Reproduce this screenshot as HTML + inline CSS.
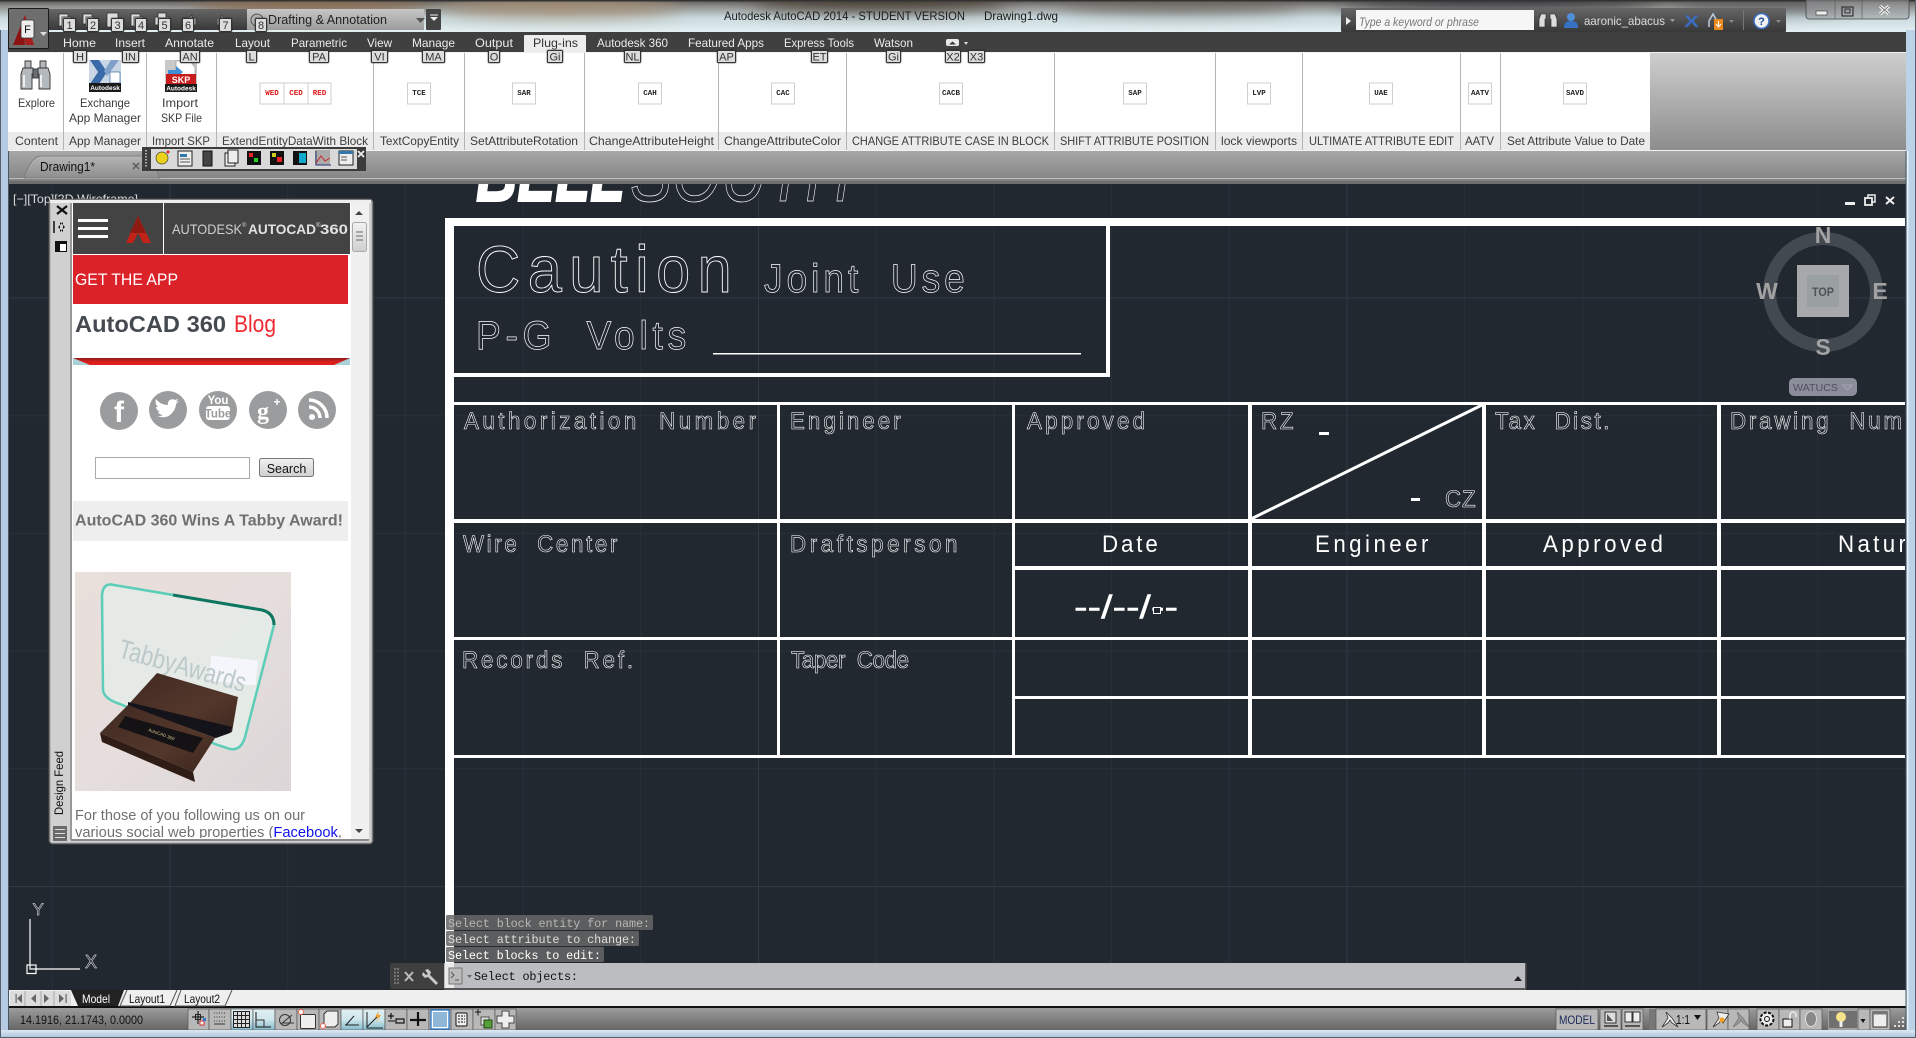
<!DOCTYPE html>
<html><head><meta charset="utf-8"><title>AutoCAD 2014</title>
<style>
html,body{margin:0;padding:0;background:#212830;width:1916px;height:1038px;overflow:hidden}
svg{display:block;position:absolute;left:0;top:0}
text{font-family:"Liberation Sans",sans-serif;white-space:pre}
.t{font-size:12px;fill:#ececec}
.p{font-size:12px;fill:#3c3c3c}
.b{font-size:12px;fill:#333}
.k{font-size:11px;fill:#333;text-anchor:middle}
.kr{fill:#dcdcdc;stroke:#333;stroke-width:1;filter:drop-shadow(.5px .5px .7px #222)}
.ib{fill:#fff;stroke:#cfcfcf;stroke-width:1}
.it{font-family:"Liberation Mono",monospace;font-weight:bold;font-size:7.5px;text-anchor:middle;fill:#222}
.ir{font-family:"Liberation Mono",monospace;font-weight:bold;font-size:7.5px;text-anchor:middle;fill:#e01818}
.d{fill:none;stroke:#fff;stroke-width:.6;font-size:24px}
.dd{fill:#fff;font-size:24px}
.m{font-family:"Liberation Mono",monospace;font-size:11.8px}
.sb{fill:#b8b8b8;stroke:#555;stroke-width:.7}
.sa{fill:url(#gBlue);stroke:#555;stroke-width:.7}
</style></head><body>
<svg width="1916" height="1038" viewBox="0 0 1916 1038" xmlns="http://www.w3.org/2000/svg">
<defs>
<linearGradient id="gAero" x1="0" y1="0" x2="0" y2="1"><stop offset="0" stop-color="#5b5855"/><stop offset=".2" stop-color="#8f8f8c"/><stop offset=".55" stop-color="#c9d9dd"/><stop offset="1" stop-color="#e4f0f3"/></linearGradient>
<linearGradient id="gDark" x1="0" y1="0" x2="0" y2="1"><stop offset="0" stop-color="#666"/><stop offset="1" stop-color="#383838"/></linearGradient>
<linearGradient id="gCombo" x1="0" y1="0" x2="0" y2="1"><stop offset="0" stop-color="#c6c6c6"/><stop offset="1" stop-color="#9c9c9c"/></linearGradient>
<linearGradient id="gRib" x1="0" y1="0" x2="0" y2="1"><stop offset="0" stop-color="#cfcfcf"/><stop offset="1" stop-color="#8d8d8d"/></linearGradient>
<linearGradient id="gDoc" x1="0" y1="0" x2="0" y2="1"><stop offset="0" stop-color="#a8a8a8"/><stop offset=".85" stop-color="#858585"/><stop offset="1" stop-color="#7a7a7a"/></linearGradient>
<linearGradient id="gTab" x1="0" y1="0" x2="0" y2="1"><stop offset="0" stop-color="#b5b5b5"/><stop offset="1" stop-color="#8e8e8e"/></linearGradient>
<linearGradient id="gStat" x1="0" y1="0" x2="0" y2="1"><stop offset="0" stop-color="#9c9c9c"/><stop offset="1" stop-color="#666"/></linearGradient>
<linearGradient id="gBlue" x1="0" y1="0" x2="0" y2="1"><stop offset="0" stop-color="#e0f0f4"/><stop offset=".5" stop-color="#cfe6ec"/><stop offset="1" stop-color="#83bccb"/></linearGradient>
<linearGradient id="gFrame" x1="0" y1="0" x2="0" y2="1"><stop offset="0" stop-color="#dce9f2"/><stop offset="1" stop-color="#a9c3dc"/></linearGradient>
<linearGradient id="gBtn" x1="0" y1="0" x2="0" y2="1"><stop offset="0" stop-color="#f2f2f2"/><stop offset="1" stop-color="#cfcfcf"/></linearGradient>
<linearGradient id="gPhoto" x1="0" y1="0" x2="1" y2="1"><stop offset="0" stop-color="#e9dfdb"/><stop offset=".5" stop-color="#e6dedd"/><stop offset="1" stop-color="#dcd6d8"/></linearGradient>
<linearGradient id="gWood" x1="0" y1="0" x2="1" y2="1"><stop offset="0" stop-color="#3f2a22"/><stop offset=".6" stop-color="#54372b"/><stop offset="1" stop-color="#3a261e"/></linearGradient>
<linearGradient id="gRed" x1="0" y1="0" x2="0" y2="1"><stop offset="0" stop-color="#8d1a1a"/><stop offset=".5" stop-color="#d61f1f"/><stop offset="1" stop-color="#e31f1f"/></linearGradient>
<filter id="bl" x="-30%" y="-100%" width="160%" height="300%"><feGaussianBlur stdDeviation="9"/></filter>
<clipPath id="cCanvas"><rect x="9" y="184" width="1896" height="806"/></clipPath>
<clipPath id="cFeed"><rect x="73" y="203" width="278" height="635"/></clipPath>
<clipPath id="cTitle"><rect x="0" y="0" width="1916" height="32"/></clipPath>
</defs>

<!-- base -->
<rect width="1916" height="1038" fill="#c3d6e8"/>

<!-- aero title -->
<rect x="0" y="0" width="1916" height="32" fill="url(#gAero)"/>
<g clip-path="url(#cTitle)" filter="url(#bl)">
<ellipse cx="310" cy="4" rx="120" ry="10" fill="#8a6a50"/>
<ellipse cx="560" cy="6" rx="120" ry="10" fill="#a58e74"/>
<ellipse cx="880" cy="2" rx="130" ry="8" fill="#3c3028"/>
<ellipse cx="1180" cy="3" rx="120" ry="8" fill="#6c655e"/>
<ellipse cx="1500" cy="2" rx="160" ry="7" fill="#2c2a30"/>
<ellipse cx="1760" cy="3" rx="90" ry="7" fill="#55565a"/>
</g>
<rect x="0" y="0" width="1916" height="1.5" fill="#333"/>
<text x="724" y="20" font-size="12" fill="#1c1c1c" textLength="241" lengthAdjust="spacingAndGlyphs">Autodesk AutoCAD 2014 - STUDENT VERSION</text>
<text x="984" y="20" font-size="12" fill="#1c1c1c" textLength="74" lengthAdjust="spacingAndGlyphs">Drawing1.dwg</text>

<!-- window buttons -->
<rect x="1806" y="-3" width="103" height="22" rx="3" fill="#9a9d9f" fill-opacity=".55" stroke="#444" stroke-width=".8"/>
<line x1="1835" y1="0" x2="1835" y2="19" stroke="#555" stroke-width=".6"/><line x1="1862" y1="0" x2="1862" y2="19" stroke="#555" stroke-width=".6"/>
<rect x="1816" y="11" width="11" height="4" fill="#eee" stroke="#444" stroke-width=".7"/>
<rect x="1842" y="7" width="11" height="9" fill="none" stroke="#333" stroke-width="1.2"/><rect x="1845" y="9" width="5" height="4" fill="none" stroke="#333"/>
<path d="M1880 6 L1889 14 M1889 6 L1880 14" stroke="#eee" stroke-width="3.4"/><path d="M1880 6 L1889 14 M1889 6 L1880 14" stroke="#444" stroke-width=".6"/>

<!-- tab bar -->
<rect x="8" y="32" width="1898" height="20" fill="#404040"/>
<path d="M524 52 V36 q0 -1 1 -1 H585 q1 0 1 1 V52z" fill="#ededed"/>
<text class="t" x="63" y="47" textLength="33" lengthAdjust="spacingAndGlyphs">Home</text>
<text class="t" x="115" y="47" textLength="30" lengthAdjust="spacingAndGlyphs">Insert</text>
<text class="t" x="165" y="47" textLength="49" lengthAdjust="spacingAndGlyphs">Annotate</text>
<text class="t" x="235" y="47" textLength="35" lengthAdjust="spacingAndGlyphs">Layout</text>
<text class="t" x="291" y="47" textLength="56" lengthAdjust="spacingAndGlyphs">Parametric</text>
<text class="t" x="367" y="47" textLength="25" lengthAdjust="spacingAndGlyphs">View</text>
<text class="t" x="412" y="47" textLength="43" lengthAdjust="spacingAndGlyphs">Manage</text>
<text class="t" x="475" y="47" textLength="38" lengthAdjust="spacingAndGlyphs">Output</text>
<text class="b" x="533" y="47" textLength="45" lengthAdjust="spacingAndGlyphs">Plug-ins</text>
<text class="t" x="597" y="47" textLength="71" lengthAdjust="spacingAndGlyphs">Autodesk 360</text>
<text class="t" x="688" y="47" textLength="76" lengthAdjust="spacingAndGlyphs">Featured Apps</text>
<text class="t" x="784" y="47" textLength="70" lengthAdjust="spacingAndGlyphs">Express Tools</text>
<text class="t" x="874" y="47" textLength="39" lengthAdjust="spacingAndGlyphs">Watson</text>
<rect x="946" y="39" width="13" height="7" rx="2" fill="#e8e8e8"/><path d="M949 44.500l3.500 -3 3.500 3z" fill="#333"/><path d="M964 42h4l-2 3z" fill="#ddd"/>

<!-- QAT -->
<rect x="49" y="9" width="198" height="21" fill="url(#gDark)"/>
<rect x="247" y="9" width="177" height="21" fill="url(#gCombo)"/>
<rect x="426" y="9" width="15" height="21" rx="1" fill="#444"/>
<path d="M430 17h8l-4 4z M430 14.500h8v1h-8z" fill="#eee"/>
<path d="M416 18h9l-4.500 5z" fill="#555"/>
<text x="268" y="24" font-size="12.500" fill="#222" textLength="119" lengthAdjust="spacingAndGlyphs">Drafting &amp; Annotation</text>
<circle cx="257" cy="20" r="6" fill="#b0b0b0" stroke="#555"/>
<g fill="#ddd" stroke="#333" stroke-width=".8">
<rect x="59" y="14" width="9" height="12"/><rect x="62" y="17" width="9" height="12"/>
<rect x="83" y="14" width="9" height="10"/><rect x="86" y="17" width="8" height="10"/>
<rect x="107" y="13" width="11" height="14"/>
<rect x="131" y="14" width="9" height="12"/><rect x="134" y="17" width="9" height="10"/>
<rect x="155" y="17" width="14" height="8"/><rect x="158" y="13" width="8" height="5"/>
</g>
<path d="M185 21 l7 -6 v3 h4 v7 h-4 v-1z" fill="#aaa" stroke="#333" stroke-width=".8"/>
<path d="M228 21 l-7 -6 v3 h-4 v7 h4 v-1z" fill="#888" stroke="#444" stroke-width=".8"/>
<!-- app button -->
<rect x="8.500" y="8.500" width="40" height="40" rx="1" fill="#6e6e6e" stroke="#1c1c1c"/>
<path d="M13 45 L25 15 L31 36 L24 36 L25 45 Z" fill="#8e1414"/>
<path d="M25 15 L34 45 L26 45 L22 30 Z" fill="#a81e1e"/>
<rect x="21" y="20" width="13" height="18" rx="2" fill="#ededed" stroke="#333" stroke-width=".8"/>
<text x="27.500" y="33" font-size="11" fill="#111" text-anchor="middle">F</text>
<path d="M40 32h7l-3.500 4z" fill="#ddd"/>

<!-- ribbon -->
<rect x="8" y="52" width="1642" height="98" fill="#fff"/>
<rect x="1650" y="52" width="256" height="98" fill="url(#gRib)"/>
<rect x="8" y="52" width="1898" height="1" fill="#f0f0f0"/>
<rect x="8" y="132" width="1642" height="18" fill="#ebebeb"/>
<rect x="8" y="150" width="1898" height="1.500" fill="#f2f2f2"/>
<g stroke="#b4b4b4" stroke-width="1">
<line x1="63.500" y1="53" x2="63.500" y2="150"/><line x1="146.500" y1="53" x2="146.500" y2="150"/><line x1="216.500" y1="53" x2="216.500" y2="150"/><line x1="373.500" y1="53" x2="373.500" y2="150"/><line x1="464.500" y1="53" x2="464.500" y2="150"/><line x1="584.500" y1="53" x2="584.500" y2="150"/><line x1="718.500" y1="53" x2="718.500" y2="150"/><line x1="846.500" y1="53" x2="846.500" y2="150"/><line x1="1054.500" y1="53" x2="1054.500" y2="150"/><line x1="1215.500" y1="53" x2="1215.500" y2="150"/><line x1="1302.500" y1="53" x2="1302.500" y2="150"/><line x1="1460.500" y1="53" x2="1460.500" y2="150"/><line x1="1500.500" y1="53" x2="1500.500" y2="150"/>
</g>
<!-- ribbon panel labels -->
<text class="p" x="15" y="145" textLength="43" lengthAdjust="spacingAndGlyphs">Content</text>
<text class="p" x="69" y="145" textLength="72" lengthAdjust="spacingAndGlyphs">App Manager</text>
<text class="p" x="152" y="145" textLength="58" lengthAdjust="spacingAndGlyphs">Import SKP</text>
<text class="p" x="222" y="145" textLength="146" lengthAdjust="spacingAndGlyphs">ExtendEntityDataWith Block</text>
<text class="p" x="380" y="145" textLength="79" lengthAdjust="spacingAndGlyphs">TextCopyEntity</text>
<text class="p" x="470" y="145" textLength="108" lengthAdjust="spacingAndGlyphs">SetAttributeRotation</text>
<text class="p" x="589" y="145" textLength="125" lengthAdjust="spacingAndGlyphs">ChangeAttributeHeight</text>
<text class="p" x="724" y="145" textLength="117" lengthAdjust="spacingAndGlyphs">ChangeAttributeColor</text>
<text class="p" x="852" y="145" textLength="197" lengthAdjust="spacingAndGlyphs">CHANGE ATTRIBUTE CASE IN BLOCK</text>
<text class="p" x="1060" y="145" textLength="149" lengthAdjust="spacingAndGlyphs">SHIFT ATTRIBUTE POSITION</text>
<text class="p" x="1221" y="145" textLength="76" lengthAdjust="spacingAndGlyphs">lock viewports</text>
<text class="p" x="1309" y="145" textLength="145" lengthAdjust="spacingAndGlyphs">ULTIMATE ATTRIBUTE EDIT</text>
<text class="p" x="1465" y="145" textLength="29" lengthAdjust="spacingAndGlyphs">AATV</text>
<text class="p" x="1507" y="145" textLength="138" lengthAdjust="spacingAndGlyphs">Set Attribute Value to Date</text>
<!-- big buttons -->
<text class="p" x="18" y="107" textLength="37" lengthAdjust="spacingAndGlyphs">Explore</text>
<text class="p" x="80" y="107" textLength="50" lengthAdjust="spacingAndGlyphs">Exchange</text>
<text class="p" x="69" y="122" textLength="72" lengthAdjust="spacingAndGlyphs">App Manager</text>
<text class="p" x="162" y="107" textLength="36" lengthAdjust="spacingAndGlyphs">Import</text>
<text class="p" x="161" y="122" textLength="41" lengthAdjust="spacingAndGlyphs">SKP File</text>
<!-- binoculars -->
<g fill="#b4b9bd" stroke="#333" stroke-width=".9">
<path d="M25 61h6v7h-6z M40 61h6v7h-6z"/>
<path d="M23 68h10v6h-1v15h-11v-15z"/><path d="M38 68h10l2 6v15h-11v-15h-1z"/>
<rect x="33" y="69" width="5" height="9" fill="#6a6f74"/>
</g>
<path d="M24 75v12M41 75v12" stroke="#eee" stroke-width="2"/>
<!-- exchange -->
<rect x="89" y="60" width="32" height="32" fill="#c9d6e6"/>
<path d="M90 60h9l8 12 -8 12h-9l8 -12z" fill="#3a6aa8"/>
<path d="M111 60h8l-12 16 -3 -5z" fill="#7fa0c8"/>
<rect x="110" y="72" width="10" height="11" fill="#fff" stroke="#3a6aa8" stroke-width=".7"/>
<rect x="89" y="83" width="32" height="9" fill="#1a1a1a"/>
<text x="105" y="90" font-size="6.500" font-weight="bold" fill="#fff" text-anchor="middle">Autodesk</text>
<!-- SKP -->
<rect x="165" y="60" width="32" height="32" fill="#c8c8c8"/>
<path d="M176 61h14l5 6v11h-19z" fill="#fff" stroke="#888" stroke-width=".6"/>
<path d="M168 70h8v-4l7 6 -7 6v-4h-8z" fill="#3f8fd8"/>
<rect x="166" y="74" width="30" height="10" fill="#c91c1c"/>
<text x="181" y="83" font-size="9" font-weight="bold" fill="#fff" text-anchor="middle">SKP</text>
<rect x="165" y="84" width="32" height="8" fill="#1a1a1a"/>
<text x="181" y="90.500" font-size="6.500" font-weight="bold" fill="#fff" text-anchor="middle">Autodesk</text>
<!-- small buttons -->
<rect class="ib" x="260" y="83" width="24" height="21"/><rect class="ib" x="284" y="83" width="24" height="21"/><rect class="ib" x="308" y="83" width="23" height="21"/>
<text class="ir" x="272" y="95">WED</text><text class="ir" x="296" y="95">CED</text><text class="ir" x="319.500" y="95">RED</text>
<rect class="ib" x="407.500" y="83" width="23" height="21"/><text class="it" x="419" y="95">TCE</text>
<rect class="ib" x="512.500" y="83" width="23" height="21"/><text class="it" x="524" y="95">SAR</text>
<rect class="ib" x="638.500" y="83" width="23" height="21"/><text class="it" x="650" y="95">CAH</text>
<rect class="ib" x="771.500" y="83" width="23" height="21"/><text class="it" x="783" y="95">CAC</text>
<rect class="ib" x="939.500" y="83" width="23" height="21"/><text class="it" x="951" y="95">CACB</text>
<rect class="ib" x="1123.500" y="83" width="23" height="21"/><text class="it" x="1135" y="95">SAP</text>
<rect class="ib" x="1247.500" y="83" width="23" height="21"/><text class="it" x="1259" y="95">LVP</text>
<rect class="ib" x="1369.500" y="83" width="23" height="21"/><text class="it" x="1381" y="95">UAE</text>
<rect class="ib" x="1468.500" y="83" width="23" height="21"/><text class="it" x="1480" y="95">AATV</text>
<rect class="ib" x="1563.500" y="83" width="23" height="21"/><text class="it" x="1575" y="95">SAVD</text>

<!-- doc tab bar -->
<rect x="8" y="151" width="1898" height="33" fill="url(#gDoc)"/>
<rect x="8" y="178" width="1898" height="1" fill="#bdbdbd"/>
<rect x="8" y="181" width="1898" height="3" fill="#6e6e6e"/>
<path d="M24 178 Q30 158 40 156 H150 L160 178Z" fill="url(#gTab)" stroke="#777" stroke-width=".7"/>
<text x="40" y="171" font-size="12.500" fill="#111" textLength="55" lengthAdjust="spacingAndGlyphs">Drawing1*</text>
<path d="M133 163l6 6m0 -6l-6 6" stroke="#666" stroke-width="1.800"/>

<!-- canvas -->
<rect x="9" y="184" width="1897" height="806" fill="#212830"/>
<g clip-path="url(#cCanvas)">
<path d="M52.300 184V990M287.700 184V990M405.400 184V990M523.100 184V990M640.800 184V990M876.200 184V990M993.900 184V990M1111.600 184V990M1229.300 184V990M1464.700 184V990M1582.400 184V990M1700.100 184V990M1817.800 184V990M9 533.400H1906M9 651.100H1906M9 768.800H1906M9 415.700H1906" stroke="#2a313a" stroke-width="1" fill="none"/>
<path d="M170 184V990M758.500 184V990M1347 184V990M9 298H1906M9 886.500H1906" stroke="#323942" stroke-width="1" fill="none"/>

<!-- BELLSOUTH -->
<text x="476" y="201" font-size="82" font-weight="bold" font-style="italic" fill="#fff" stroke="#fff" stroke-width="2" textLength="149" lengthAdjust="spacingAndGlyphs">BELL</text>
<text x="630" y="201" font-size="82" font-style="italic" fill="none" stroke="#fff" stroke-width=".7" textLength="221" lengthAdjust="spacingAndGlyphs">SOUTH</text>

<!-- linework -->
<g fill="#fff">
<rect x="445" y="218" width="1461" height="8"/>
<rect x="445" y="218" width="9" height="772"/>
<rect x="1106" y="226" width="4" height="151"/>
<rect x="454" y="373" width="656" height="4"/>
<rect x="454" y="402" width="1452" height="3"/>
<rect x="454" y="519" width="1452" height="4"/>
<rect x="454" y="637" width="1452" height="3"/>
<rect x="454" y="755" width="1452" height="3"/>
<rect x="1012" y="566" width="894" height="4"/>
<rect x="1015" y="696" width="891" height="3"/>
<rect x="777" y="405" width="3" height="350"/>
<rect x="1012" y="405" width="3" height="350"/>
<rect x="1248" y="405" width="4" height="350"/>
<rect x="1482" y="405" width="4" height="350"/>
<rect x="1717" y="405" width="4" height="350"/>
<rect x="713" y="353" width="368" height="1.500"/>
<rect x="1319" y="432" width="10" height="3"/>
<rect x="1411" y="498" width="9" height="3"/>
</g>
<line x1="1251" y1="519" x2="1482" y2="405" stroke="#fff" stroke-width="3"/>

<text class="d" style="font-size:66px;stroke-width:.9" transform="translate(476 292) scale(.93 1)" textLength="275" lengthAdjust="spacing">Caution</text>
<text class="d" style="font-size:40px;stroke-width:.7" transform="translate(764 292) scale(.93 1)" textLength="216" lengthAdjust="spacing">Joint  Use</text>
<text class="d" style="font-size:40px;stroke-width:.7" transform="translate(476 349) scale(.93 1)" textLength="226" lengthAdjust="spacing">P-G  Volts</text>
<text class="d" transform="translate(464 429) scale(.93 1)" textLength="314" lengthAdjust="spacing">Authorization  Number</text>
<text class="d" transform="translate(790 429) scale(.93 1)" textLength="119" lengthAdjust="spacing">Engineer</text>
<text class="d" transform="translate(1027 429) scale(.93 1)" textLength="127" lengthAdjust="spacing">Approved</text>
<text class="d" transform="translate(1261 429) scale(.93 1)" textLength="35" lengthAdjust="spacing">RZ</text>
<text class="d" transform="translate(1445 507) scale(.93 1)" textLength="33" lengthAdjust="spacing">CZ</text>
<text class="d" transform="translate(1495 429) scale(.93 1)" textLength="123" lengthAdjust="spacing">Tax  Dist.</text>
<text class="d" transform="translate(1730 429) scale(.93 1)" textLength="185" lengthAdjust="spacing">Drawing  Num</text>
<text class="d" transform="translate(463 552) scale(.93 1)" textLength="166" lengthAdjust="spacing">Wire  Center</text>
<text class="d" transform="translate(790 552) scale(.93 1)" textLength="180" lengthAdjust="spacing">Draftsperson</text>
<text class="d" transform="translate(462 668) scale(.93 1)" textLength="184" lengthAdjust="spacing">Records  Ref.</text>
<text class="d" transform="translate(791 668) scale(.93 1)" textLength="127" lengthAdjust="spacing">Taper  Code</text>
<text class="dd" transform="translate(1102 552) scale(.93 1)" textLength="60" lengthAdjust="spacing">Date</text>
<text class="dd" transform="translate(1315 552) scale(.93 1)" textLength="122" lengthAdjust="spacing">Engineer</text>
<text class="dd" transform="translate(1543 552) scale(.93 1)" textLength="129" lengthAdjust="spacing">Approved</text>
<text class="dd" transform="translate(1838 552) scale(.93 1)" textLength="73" lengthAdjust="spacing">Natur</text>
<text class="dd" style="font-size:32px;stroke:#fff;stroke-width:.5" x="1074" y="618" textLength="104" lengthAdjust="spacingAndGlyphs">--/--/--</text>
<rect x="1153.500" y="607.500" width="7" height="6" fill="#212830" stroke="#fff"/>
</g>

<!-- viewport controls label -->
<text x="13" y="203" font-size="12" fill="#dcdcdc" textLength="125" lengthAdjust="spacingAndGlyphs">[−][Top][2D Wireframe]</text>
<rect x="1845" y="202" width="10" height="3" fill="#eee"/>
<rect x="1868" y="195" width="7" height="7" fill="none" stroke="#eee" stroke-width="1.500"/>
<rect x="1865" y="198" width="7" height="7" fill="#212830" stroke="#eee" stroke-width="1.800"/>
<path d="M1886 197l8 7m0 -7l-8 7" stroke="#eee" stroke-width="2"/>

<!-- ViewCube -->
<circle cx="1823" cy="292" r="53.500" fill="none" stroke="#434950" stroke-width="13"/>
<rect x="1797" y="265" width="52" height="52" fill="#a7a8a9"/>
<rect x="1807" y="275" width="32" height="32" fill="#9a9fa0"/>
<text x="1823" y="296" font-size="12" font-weight="bold" fill="#4e5358" text-anchor="middle" textLength="22" lengthAdjust="spacingAndGlyphs">TOP</text>
<text x="1823" y="243" font-size="23" font-weight="bold" fill="#a2a2a2" text-anchor="middle">N</text>
<text x="1823" y="355" font-size="23" font-weight="bold" fill="#a2a2a2" text-anchor="middle">S</text>
<text x="1767" y="299" font-size="23" font-weight="bold" fill="#a2a2a2" text-anchor="middle">W</text>
<text x="1880" y="299" font-size="23" font-weight="bold" fill="#a2a2a2" text-anchor="middle">E</text>
<rect x="1789" y="378" width="68" height="18" rx="5" fill="#8b8d9b"/>
<text x="1793" y="391" font-size="10.500" fill="#4d4f5c" textLength="45" lengthAdjust="spacingAndGlyphs">WATUCS</text>
<path d="M1843 385h9l-4.500 5z" fill="none" stroke="#a2a4b0"/>

<!-- UCS -->
<g stroke="#fff" fill="none" stroke-width="1.200">
<path d="M30 919V969H80"/><rect x="27" y="965" width="9" height="8.500"/>
</g>
<text x="32.500" y="915" font-size="17" fill="none" stroke="#fff" stroke-width=".45">Y</text>
<text x="85" y="968" font-size="18" fill="none" stroke="#fff" stroke-width=".45">X</text>

<!-- Command history -->
<rect x="446" y="915" width="207" height="15" rx="1.500" fill="#666" fill-opacity=".85"/>
<rect x="446" y="931" width="193" height="15" rx="1.500" fill="#666" fill-opacity=".85"/>
<rect x="446" y="947" width="158" height="15" rx="1.500" fill="#666" fill-opacity=".85"/>
<text class="m" x="448" y="927" fill="#b6b6b6" textLength="202">Select block entity for name:</text>
<text class="m" x="448" y="943" fill="#dedede" textLength="188">Select attribute to change:</text>
<text class="m" x="448" y="959" fill="#fff" textLength="153">Select blocks to edit:</text>
<!-- Command bar -->
<rect x="390" y="963" width="54" height="26" rx="2" fill="#3f3f3f"/>
<path d="M395 968v17M398 968v17" stroke="#888" stroke-width="1.500" stroke-dasharray="2 1.500"/>
<path d="M405 972l8 9m0 -9l-8 9" stroke="#bbb" stroke-width="2"/>
<path d="M425 970l3 -1 3 3 -1 3 8 8 -2 2 -8 -8 -3 1 -3 -3 1 -3 3 3 2 -1 -3 -4z" fill="#c9c9c9"/>
<rect x="444" y="963" width="1082" height="26" fill="#bcbdc0"/>
<rect x="445" y="963" width="9" height="27" fill="#fff" fill-opacity=".7"/>
<rect x="444" y="988" width="1082" height="2" fill="#555"/>
<rect x="1525" y="963" width="1.500" height="26" fill="#555"/>
<rect x="449" y="968" width="13" height="16" fill="#bbb" stroke="#777"/>
<path d="M451 972l3 3 -3 3M455 980h4" stroke="#555" fill="none"/>
<path d="M467 975h5l-2.500 3z" fill="#666"/>
<text class="m" x="474" y="980" fill="#111" textLength="104">Select objects:</text>
<path d="M1514 981h8l-4 -5z" fill="#222"/>

<!-- Design Feed palette -->
<rect x="49.500" y="199.500" width="323" height="644" rx="3" fill="#d0d0d0" stroke="#777" stroke-width="1.500"/>
<rect x="50" y="200" width="321" height="3" fill="#eee"/>
<rect x="70" y="203" width="2" height="637" fill="#999"/>
<rect x="72" y="203" width="279" height="636" fill="#fff"/>
<rect x="351" y="203" width="18" height="636" fill="#f0f0f0"/>
<rect x="71" y="839" width="298" height="2" fill="#8a8a8a"/>
<path d="M57 206l10 8m0 -8l-10 8" stroke="#111" stroke-width="2.200"/>
<path d="M54 221v12" stroke="#111" stroke-width="1.500"/><path d="M63 222l-5 5 5 5zM60 222l5 5 -5 5z" fill="#111"/>
<rect x="55.500" y="241.500" width="11" height="10" fill="#fff" stroke="#111"/><rect x="55" y="241" width="12" height="3" fill="#111"/><rect x="55" y="244" width="5" height="8" fill="#111"/>
<text transform="translate(63,815) rotate(-90)" font-size="12" fill="#111" textLength="64" lengthAdjust="spacingAndGlyphs">Design Feed</text>
<rect x="53" y="826" width="14" height="15" fill="#6a6a6a"/>
<path d="M55 829.500h10M55 833.500h10M55 837.500h10" stroke="#ddd"/>
<path d="M355 215h8l-4 -4z M355 829h8l-4 4z" fill="#444"/>
<rect x="352.500" y="222.500" width="14" height="29" rx="2" fill="url(#gBtn)" stroke="#aaa"/>
<path d="M356 232h7M356 236h7M356 240h7" stroke="#666"/>

<g clip-path="url(#cFeed)">
<rect x="73" y="203" width="277" height="51" fill="#434343"/>
<rect x="73" y="254" width="277" height="1" fill="#fff"/>
<rect x="163" y="203" width="1" height="51" fill="#fff"/>
<rect x="78" y="219" width="30" height="3" fill="#fff"/><rect x="78" y="227" width="30" height="3" fill="#fff"/><rect x="78" y="235" width="30" height="3" fill="#fff"/>
<path d="M138 216L151 243H143L138 233L133 243H126Z" fill="#c22318"/><path d="M138 216L130 233H146Z" fill="#8f1a12"/>
<text x="172" y="234" font-size="14" fill="#cfcfcf" textLength="70" lengthAdjust="spacingAndGlyphs">AUTODESK</text>
<text x="242" y="227" font-size="6" fill="#cfcfcf">®</text>
<text x="248" y="234" font-size="14" font-weight="bold" fill="#e2e2e2" textLength="68" lengthAdjust="spacingAndGlyphs">AUTOCAD</text>
<text x="316" y="227" font-size="6" fill="#e2e2e2">®</text>
<text x="320" y="234" font-size="14" font-weight="bold" fill="#e2e2e2" textLength="28" lengthAdjust="spacingAndGlyphs">360</text>
<rect x="73" y="255" width="275" height="49" fill="#dc2229"/>
<text x="75" y="285" font-size="16.500" fill="#fff" textLength="103" lengthAdjust="spacingAndGlyphs">GET THE APP</text>
<text x="75" y="332" font-size="23" font-weight="bold" fill="#454a50" textLength="151" lengthAdjust="spacingAndGlyphs">AutoCAD 360</text>
<text x="234" y="332" font-size="24" fill="#ee2a30" textLength="42" lengthAdjust="spacingAndGlyphs">Blog</text>
<rect x="73" y="358" width="277" height="7" fill="url(#gRed)"/>
<path d="M73 358L90 365H73Z M350 358L334 365H350Z" fill="#a8d2d8"/>
<!-- social -->
<g fill="#9a9c9e">
<circle cx="119" cy="411" r="19"/><circle cx="168" cy="410" r="19"/><circle cx="218" cy="410" r="19"/><circle cx="268" cy="410" r="19"/><circle cx="317" cy="410" r="19"/>
</g>
<text x="119" y="422" font-size="30" font-weight="bold" fill="#fff" text-anchor="middle">f</text>
<path d="M156 416c6 2 12 2 16 -3 3 -3 4 -7 4 -9l3 -3 -3 1 2 -3 -3 1c-3 -2 -8 0 -7 5 -5 0 -9 -2 -12 -6 -1 3 0 6 2 8l-2 0c0 2 2 4 4 5h-2c1 2 3 3 5 3 -2 1 -5 2 -7 1z" fill="#fff"/>
<text x="218" y="404" font-size="11.500" font-weight="bold" fill="#fff" text-anchor="middle">You</text>
<rect x="206" y="406" width="24" height="14" rx="3" fill="#fff"/>
<text x="218" y="417.500" font-size="11.500" font-weight="bold" fill="#9a9c9e" text-anchor="middle">Tube</text>
<text x="263" y="419" font-size="24" font-weight="bold" fill="#fff" text-anchor="middle" style="font-family:'Liberation Serif',serif">g</text>
<text x="277" y="406" font-size="12" font-weight="bold" fill="#fff" text-anchor="middle">+</text>
<circle cx="312" cy="417" r="3" fill="#fff"/>
<path d="M309 407a11 11 0 0 1 11 11M309 400a18 18 0 0 1 18 18" fill="none" stroke="#fff" stroke-width="3.500"/>
<!-- search -->
<rect x="95.500" y="457.500" width="154" height="21" fill="#fff" stroke="#aaa"/>
<rect x="259.500" y="458.500" width="54" height="18" rx="2" fill="url(#gBtn)" stroke="#777"/>
<text x="286.500" y="473" font-size="12.500" fill="#111" text-anchor="middle">Search</text>
<!-- headline -->
<rect x="73" y="501" width="275" height="40" fill="#eeeeee"/>
<text x="75" y="525.500" font-size="15.500" font-weight="bold" fill="#707070" textLength="268" lengthAdjust="spacingAndGlyphs">AutoCAD 360 Wins A Tabby Award!</text>
<!-- photo -->
<rect x="75" y="572" width="216" height="219" fill="url(#gPhoto)"/>
<path d="M111 584.500 L262 610 Q274 613 274 625 L245 737 Q241 751 230 749 L215 744 L120 704 Q104 699 103 690 L102 595 Q103 584 111 584.500Z" fill="#e4ece8" fill-opacity=".85" stroke="#5ccdb8" stroke-width="2.500"/>
<path d="M173 595 L262 610 Q274 613 274 625" fill="none" stroke="#0e7660" stroke-width="3"/>
<rect x="210" y="658" width="47" height="25" fill="#f4f6fb" transform="rotate(6 233 670)"/>
<text transform="translate(117,657) rotate(15.500)" font-size="27" fill="#bcc9cb" textLength="131" lengthAdjust="spacingAndGlyphs">TabbyAwards</text>
<path d="M157 673L238 697L232 732L215 738L128 705Z" fill="url(#gWood)"/>
<path d="M128 702L232 727L230 733L216 738L128 706Z" fill="#15131a"/>
<path d="M128 705L215 738L193 772L100 733Z" fill="url(#gWood)"/>
<path d="M100 733L193 772L195 782L102 742Z" fill="#2e1c15"/>
<path d="M125 716L203 738L193 753L118 727Z" fill="#141214"/>
<text transform="translate(148,731) rotate(20)" font-size="4.500" fill="#d7c98e">AutoCAD 360</text>
<!-- paragraph -->
<text x="75" y="820" font-size="14.700" fill="#707070" textLength="230" lengthAdjust="spacingAndGlyphs">For those of you following us on our</text>
<text x="75" y="837" font-size="14.700" fill="#707070">various social web properties (<tspan fill="#1010ee">Facebook</tspan>,</text>
</g>

<!-- Floating toolbar -->
<rect x="142" y="147" width="224" height="24" fill="#3c3c3c"/>
<rect x="151" y="149" width="206" height="20" fill="#d9d9d9"/>
<path d="M146 150v18" stroke="#aaa" stroke-width="2" stroke-dasharray="1.500 1.500"/>
<path d="M358 151l6 6m0 -6l-6 6" stroke="#eee" stroke-width="1.800"/>
<circle cx="162" cy="158" r="6" fill="#e8d21a" stroke="#444" stroke-width=".7"/><circle cx="168" cy="152" r="1.500" fill="#d22"/>
<rect x="178" y="151" width="14" height="15" fill="#eee" stroke="#222"/><rect x="180" y="154" width="7" height="3" fill="#37a"/><path d="M180 159h10M180 162h10" stroke="#555"/>
<rect x="203" y="151" width="9" height="15" fill="#444" stroke="#111"/>
<rect x="225" y="153" width="10" height="13" fill="#eee" stroke="#222"/><rect x="228" y="150" width="10" height="13" fill="#eee" stroke="#222"/>
<rect x="247" y="151" width="14" height="14" fill="#111"/><rect x="249" y="153" width="4" height="4" fill="#e22"/><rect x="254" y="158" width="4" height="4" fill="#2c2"/>
<rect x="270" y="151" width="14" height="14" fill="#111"/><rect x="272" y="153" width="4" height="4" fill="#cc2"/><rect x="277" y="157" width="5" height="5" fill="#e22"/>
<rect x="293" y="151" width="14" height="14" fill="#111"/><rect x="299" y="153" width="7" height="10" fill="#1ac"/>
<rect x="315" y="150" width="15" height="15" fill="#aaa"/><path d="M316 151v14h15" stroke="#237" fill="none"/><path d="M316 163l5 -7 4 5 5 -3" stroke="#c22" fill="none"/>
<rect x="339" y="151" width="14" height="14" fill="#eee" stroke="#222"/><rect x="339" y="151" width="14" height="3" fill="#37a"/><path d="M341 157h6M341 160h6" stroke="#555"/>

<!-- Layout tab strip -->
<rect x="9" y="990" width="1897" height="16" fill="#efefef"/>
<rect x="9" y="1006" width="1897" height="2" fill="#111"/>
<rect x="10" y="991" width="61" height="15" fill="#dcdcdc"/>
<path d="M25 991v15M41 991v15M54 991v15" stroke="#aaa"/>
<g fill="#666"><path d="M22 994l-5 4.500 5 4.500zM15.500 994h1.200v9h-1.200z"/><path d="M36 994l-5 4.500 5 4.500z"/><path d="M44 994l5 4.500 -5 4.500z"/><path d="M59 994l5 4.500 -5 4.500zM65.500 994h1.200v9h-1.200z"/></g>
<path d="M71 990L78 1006H118L124 990Z" fill="#222"/>
<text x="82" y="1003" font-size="12" fill="#fff" textLength="28" lengthAdjust="spacingAndGlyphs">Model</text>
<path d="M127 990L120 1006H170L177 990" fill="none" stroke="#555"/>
<text x="129" y="1003" font-size="12" fill="#111" textLength="36" lengthAdjust="spacingAndGlyphs">Layout1</text>
<path d="M181 990L175 1006H225L232 990" fill="none" stroke="#555"/>
<text x="184" y="1003" font-size="12" fill="#111" textLength="36" lengthAdjust="spacingAndGlyphs">Layout2</text>

<!-- Status bar -->
<rect x="8" y="1008" width="1898" height="22" fill="url(#gStat)"/>
<text x="20" y="1024" font-size="12" fill="#111" textLength="123" lengthAdjust="spacingAndGlyphs">14.1916, 21.1743, 0.0000</text>
<rect class="sb" x="188" y="1009" width="21" height="21"/>
<rect class="sb" x="209" y="1009" width="22" height="21"/>
<rect class="sa" x="231" y="1009" width="22" height="21"/>
<rect class="sa" x="253" y="1009" width="22" height="21"/>
<rect class="sb" x="275" y="1009" width="22" height="21"/>
<rect class="sb" x="297" y="1009" width="22" height="21"/>
<rect class="sb" x="319" y="1009" width="22" height="21"/>
<rect class="sa" x="341" y="1009" width="22" height="21"/>
<rect class="sa" x="363" y="1009" width="22" height="21"/>
<rect class="sb" x="385" y="1009" width="22" height="21"/>
<rect class="sb" x="407" y="1009" width="22" height="21"/>
<rect class="sb" x="429" y="1009" width="22" height="21"/>
<rect class="sb" x="451" y="1009" width="22" height="21"/>
<rect class="sb" x="473" y="1009" width="22" height="21"/>
<rect class="sb" x="495" y="1009" width="21" height="21"/>
<!-- status icons -->
<path d="M192 1017h12M198 1011v13" stroke="#222" stroke-width="1.200"/><rect x="195.500" y="1014.500" width="5" height="5" fill="none" stroke="#222"/><rect x="200" y="1021" width="4" height="4" fill="#fff" stroke="#c33"/><rect x="203" y="1018" width="3" height="3" fill="#37c"/>
<path d="M214 1013h11M214 1017h11M214 1021h11" stroke="#333" stroke-dasharray="1 1.500"/><path d="M214 1024h11" stroke="#333"/>
<g stroke="#222" fill="#ddd"><rect x="233.500" y="1011.500" width="16" height="16"/><path d="M233.500 1015.500h16M233.500 1019.500h16M233.500 1023.500h16M237.500 1011.500v16M241.500 1011.500v16M245.500 1011.500v16" fill="none"/></g>
<path d="M256 1012v15h15" fill="none" stroke="#333" stroke-width="1.200"/><path d="M256 1020h8v7" fill="none" stroke="#333"/>
<circle cx="285" cy="1020" r="5.500" fill="none" stroke="#333"/><path d="M281 1024l11 -9M283 1023h11" stroke="#333"/>
<rect x="300.500" y="1014.500" width="15" height="14" rx="1" fill="#eee" stroke="#333"/><circle cx="301" cy="1012" r="2.500" fill="#fff" stroke="#e65"/>
<path d="M324 1014l3 -3h11v13l-3 3h-11z" fill="#eee" stroke="#333"/><circle cx="323" cy="1026" r="2.500" fill="#fff" stroke="#e65"/>
<path d="M345 1025h14M346 1025l8 -9" fill="none" stroke="#222"/>
<path d="M367 1012v16h16M367 1027l10 -10" fill="none" stroke="#222"/><path d="M379 1011l-4 6h3l-2 5 5 -7h-3z" fill="#f0a020"/>
<path d="M388 1016h6M391 1013v6" stroke="#111" stroke-width="1.200"/><rect x="396" y="1019" width="8" height="4" fill="none" stroke="#111" stroke-width="1.200"/><path d="M388 1021h7" stroke="#111"/>
<path d="M410 1020h16M418 1012v14" stroke="#111" stroke-width="2.200"/>
<rect x="431" y="1010" width="18" height="19" fill="#fff" stroke="#1a70c8" stroke-width="1.200"/><rect x="433" y="1012" width="14" height="15" fill="#8fb8d8"/>
<rect x="456" y="1013" width="11" height="13" rx="1" fill="#eee" stroke="#111"/><path d="M458 1016h7M458 1019h7M458 1022h7" stroke="#111" stroke-dasharray="2 1"/>
<path d="M475 1012h6M478 1009.500v6" stroke="#111"/><rect x="481" y="1017" width="8" height="8" fill="#ddd" stroke="#555"/><rect x="484" y="1020" width="8" height="8" fill="#5a9c3a" stroke="#1a4a10"/>
<path d="M502 1011h7v5h5v7h-5v5h-7v-5h-5v-7h5z" fill="#eee" stroke="#444"/>

<rect class="sb" x="1556" y="1009" width="42" height="21"/>
<text x="1559" y="1024" font-size="12" fill="#1a2a5a" textLength="36" lengthAdjust="spacingAndGlyphs">MODEL</text>
<rect class="sb" x="1600" y="1009" width="21" height="21"/><rect class="sb" x="1622" y="1009" width="21" height="21"/>
<rect x="1605" y="1012" width="11" height="11" fill="#ddd" stroke="#333"/><path d="M1607 1021v-7l6 7z" fill="#555"/><path d="M1604 1026h14" stroke="#333" stroke-width="1.500"/>
<rect x="1625" y="1012" width="7" height="10" fill="#eee" stroke="#333"/><rect x="1633" y="1012" width="7" height="10" fill="#eee" stroke="#333"/><path d="M1625 1026h15" stroke="#333" stroke-width="1.500"/>
<rect x="1649" y="1009" width="7" height="21" fill="#777"/>
<rect class="sb" x="1656" y="1009" width="50" height="21"/><rect class="sb" x="1707" y="1009" width="21" height="21"/><rect class="sb" x="1728" y="1009" width="21" height="21"/>
<path d="M1666 1012l2 6 -6 9 6 -4 2 -3 2 3 6 4 -6 -9z" fill="#eee" stroke="#333" stroke-width=".8"/>
<text x="1676" y="1024" font-size="12.500" fill="#111" textLength="14" lengthAdjust="spacingAndGlyphs">1:1</text>
<path d="M1694 1015h7l-3.500 5z" fill="#111"/>
<path d="M1717 1012l2 6 -6 9 6 -4 2 -3 2 3 6 -9z" fill="#eee" stroke="#333" stroke-width=".8"/><circle cx="1722" cy="1020" r="2.500" fill="#f2a020"/>
<path d="M1737 1012l2 6 -6 9 6 -4 2 -3 2 3 6 4 -6 -9z" fill="#999" stroke="#777" stroke-width=".8"/>
<rect class="sb" x="1757" y="1009" width="22" height="21"/><rect class="sb" x="1779" y="1009" width="21" height="21"/><rect class="sb" x="1800" y="1009" width="22" height="21"/>
<circle cx="1767" cy="1019" r="6.500" fill="#eee" stroke="#111" stroke-width="2" stroke-dasharray="3 1.500"/><circle cx="1767" cy="1019" r="2.500" fill="none" stroke="#111"/>
<rect x="1783" y="1019" width="9" height="8" fill="#eee" stroke="#111"/><path d="M1790 1019v-4a3 3 0 0 1 6 0v2" fill="none" stroke="#eee" stroke-width="1.500"/>
<ellipse cx="1811" cy="1019" rx="5.500" ry="7.500" fill="#888" stroke="#ddd"/>
<rect x="1828" y="1009" width="30" height="21" fill="#a0a0a0"/><rect x="1829" y="1011" width="28" height="17" fill="#707070"/>
<circle cx="1841" cy="1017" r="5" fill="#f4e38a"/><rect x="1839.500" y="1021" width="3" height="6" fill="#eee"/>
<rect class="sb" x="1858" y="1009" width="12" height="21"/><path d="M1860.500 1019h5l-2.500 4z" fill="#111"/>
<rect class="sb" x="1870" y="1009" width="20" height="21"/><rect x="1873" y="1012" width="14" height="15" fill="#eee" stroke="#333"/><rect x="1873" y="1012" width="14" height="2.500" fill="#777"/>
<g fill="#ddd"><rect x="1898" y="1021" width="2" height="2"/><rect x="1902" y="1021" width="2" height="2"/><rect x="1894" y="1025" width="2" height="2"/><rect x="1898" y="1025" width="2" height="2"/><rect x="1902" y="1025" width="2" height="2"/><rect x="1902" y="1017" width="2" height="2"/></g>

<!-- frames -->
<rect x="0" y="30" width="8" height="1008" fill="#b4cbe3"/>
<rect x="8" y="151" width="1" height="879" fill="#4a5664"/>
<rect x="1906" y="30" width="10" height="1008" fill="#bcd2e7"/>
<rect x="1905.500" y="151" width="1" height="879" fill="#4a5664"/>
<rect x="1907" y="151" width="1.500" height="880" fill="#e9f1f8"/>
<rect x="0" y="1030" width="1916" height="8" fill="url(#gFrame)"/>
<rect x="0" y="1037" width="1916" height="1" fill="#55606c"/>
<rect x="0" y="30" width="1" height="1008" fill="#55606c"/>
<rect x="1915" y="0" width="1" height="1038" fill="#55606c"/>

<!-- InfoCenter -->
<rect x="1341" y="8" width="445" height="24" rx="1" fill="url(#gDark)"/>
<rect x="1356" y="10" width="178" height="20" fill="#f6f6f6"/>
<path d="M1346 17l5 4 -5 4z" fill="#eee"/>
<text x="1359" y="26" font-size="11.500" font-style="italic" fill="#777" textLength="120" lengthAdjust="spacingAndGlyphs">Type a keyword or phrase</text>
<g fill="#ddd" stroke="#222" stroke-width=".6"><path d="M1541 14h5v5h-1v8h-6v-8z"/><path d="M1550 14h5l2 5v8h-6v-8h-1z"/></g>
<circle cx="1571" cy="17" r="4" fill="#4f8fd8"/><path d="M1564 28c0 -6 3 -7 7 -7s7 1 7 7z" fill="#3572c4"/>
<text x="1584" y="25" font-size="12" fill="#dcdcdc" textLength="81" lengthAdjust="spacingAndGlyphs">aaronic_abacus</text>
<path d="M1670 19h5l-2.500 3z" fill="#999"/>
<text x="1684" y="27" font-size="17" font-weight="bold" fill="#3a6cc0" textLength="15" lengthAdjust="spacingAndGlyphs">X</text>
<path d="M1709 27v-6l4 -7 4 7" fill="none" stroke="#bcd" stroke-width="1.500"/><rect x="1714" y="19" width="9" height="11" fill="#e98a20"/><path d="M1718.500 21v5M1716 24l2.500 3 2.500 -3" stroke="#fff" fill="none"/>
<path d="M1729 20h5l-2.500 3z" fill="#888"/>
<rect x="1743" y="10" width="1" height="20" fill="#777"/>
<circle cx="1761.500" cy="21" r="7.500" fill="#f0f0f0" stroke="#3a6cc0" stroke-width="1.500"/>
<text x="1761.500" y="25" font-size="11" font-weight="bold" fill="#1a4ca0" text-anchor="middle">?</text>
<path d="M1776 20h5l-2.500 3z" fill="#888"/>

<!-- keytips QAT -->
<g>
<rect class="kr" x="63.500" y="18.500" width="12" height="13" rx="1"/><text class="k" x="69.500" y="29">1</text>
<rect class="kr" x="87.500" y="18.500" width="11" height="13" rx="1"/><text class="k" x="93" y="29">2</text>
<rect class="kr" x="111.500" y="18.500" width="12" height="13" rx="1"/><text class="k" x="117.500" y="29">3</text>
<rect class="kr" x="135.500" y="18.500" width="11" height="13" rx="1"/><text class="k" x="141" y="29">4</text>
<rect class="kr" x="158.500" y="18.500" width="12" height="13" rx="1"/><text class="k" x="164.500" y="29">5</text>
<rect class="kr" x="182.500" y="18.500" width="11" height="13" rx="1"/><text class="k" x="188" y="29">6</text>
<rect class="kr" x="219.500" y="18.500" width="12" height="13" rx="1"/><text class="k" x="225.500" y="29">7</text>
<rect class="kr" x="255.500" y="18.500" width="11" height="13" rx="1"/><text class="k" x="261" y="29">8</text>
</g>
<!-- keytips tabs -->
<g>
<rect class="kr" x="73.500" y="50.500" width="13" height="12" rx="1"/><text class="k" x="80" y="60.500">H</text>
<rect class="kr" x="122.500" y="50.500" width="16" height="12" rx="1"/><text class="k" x="130.500" y="60.500">IN</text>
<rect class="kr" x="180.500" y="50.500" width="19" height="12" rx="1"/><text class="k" x="190" y="60.500">AN</text>
<rect class="kr" x="246.500" y="50.500" width="10" height="12" rx="1"/><text class="k" x="251.500" y="60.500">L</text>
<rect class="kr" x="309.500" y="50.500" width="19" height="12" rx="1"/><text class="k" x="319" y="60.500">PA</text>
<rect class="kr" x="371.500" y="50.500" width="16" height="12" rx="1"/><text class="k" x="379.500" y="60.500">VI</text>
<rect class="kr" x="422.500" y="50.500" width="22" height="12" rx="1"/><text class="k" x="433.500" y="60.500">MA</text>
<rect class="kr" x="488.500" y="50.500" width="11" height="12" rx="1"/><text class="k" x="494" y="60.500">O</text>
<rect class="kr" x="547.500" y="50.500" width="15" height="12" rx="1"/><text class="k" x="555" y="60.500">Gi</text>
<rect class="kr" x="624.500" y="50.500" width="16" height="12" rx="1"/><text class="k" x="632.500" y="60.500">NL</text>
<rect class="kr" x="717.500" y="50.500" width="18" height="12" rx="1"/><text class="k" x="726.500" y="60.500">AP</text>
<rect class="kr" x="811.500" y="50.500" width="16" height="12" rx="1"/><text class="k" x="819.500" y="60.500">ET</text>
<rect class="kr" x="886.500" y="50.500" width="14" height="12" rx="1"/><text class="k" x="893.500" y="60.500">Gi</text>
<rect class="kr" x="945.500" y="50.500" width="15" height="12" rx="1"/><text class="k" x="953" y="60.500">X2</text>
<rect class="kr" x="968.500" y="50.500" width="16" height="12" rx="1"/><text class="k" x="976.500" y="60.500">X3</text>
</g>
</svg>
</body></html>
